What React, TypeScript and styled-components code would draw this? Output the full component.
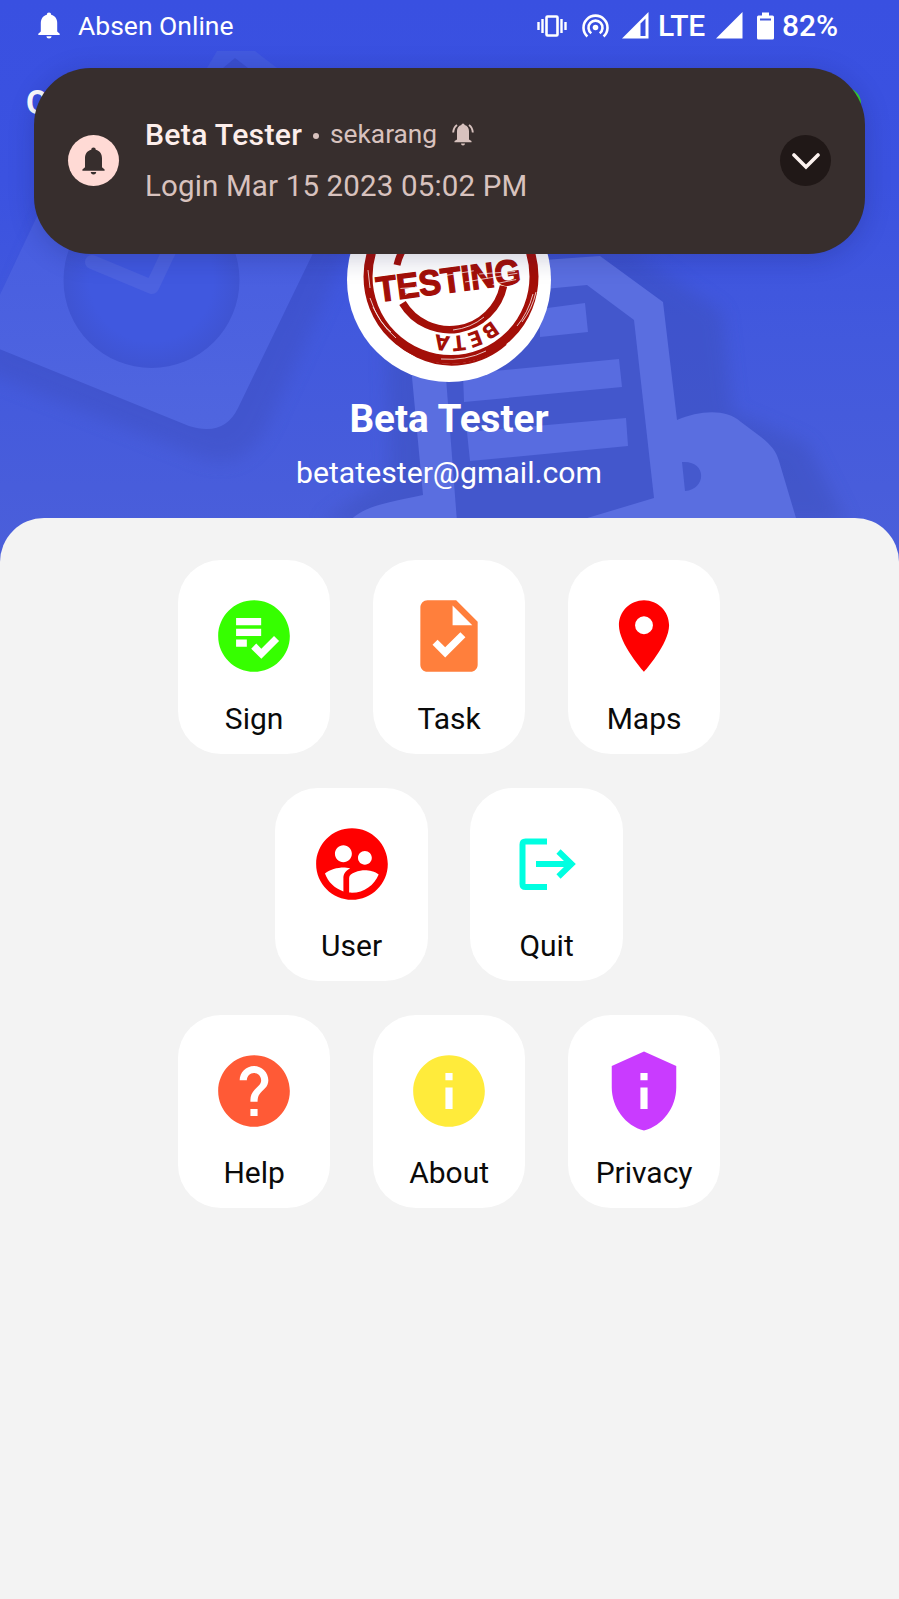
import React from 'react';
import styled, { createGlobalStyle } from 'styled-components';
import type { IconType } from 'react-icons';
import {
  MdPlaylistAddCheckCircle,
  MdTask,
  MdLocationOn,
  MdSupervisedUserCircle,
  MdHelp,
  MdInfo,
  MdPrivacyTip,
} from 'react-icons/md';

const GlobalStyle = createGlobalStyle`
  * { box-sizing: border-box; }
  body { margin: 0; background: #f3f3f3; font-family: Roboto, sans-serif; }
`;

const Screen = styled.div`
  position: relative;
  display: flex;
  flex-direction: column;
  width: 899px;
  height: 1599px;
  overflow: hidden;
  background: linear-gradient(180deg, #3950e1 0, #3b52e0 180px, #4259dd 340px, #4b5fda 560px);
`;

const Header = styled.header`
  position: relative;
  height: 518px;
  display: flex;
  flex-direction: column;
`;

const Artwork = styled.svg`
  position: absolute;
  inset: 0;
`;

const StatusBar = styled.div`
  position: relative;
  display: flex;
  align-items: center;
  height: 51px;
  padding: 0 59px 0 38px;
  color: #fff;
`;

const StatusText = styled.span<{ $size: number; $width: number; $gap: number; $weight?: number; $spacing?: number }>`
  width: ${p => p.$width}px;
  margin-left: ${p => p.$gap}px;
  font: ${p => p.$weight ?? 400} ${p => p.$size}px/50px Roboto, sans-serif;
  letter-spacing: ${p => p.$spacing ?? 0}px;
  white-space: nowrap;
`;

const StatusIcon = styled.svg<{ $gap?: number }>`
  flex: none;
  margin-left: ${p => p.$gap ?? 0}px;
`;

const Spacer = styled.div`
  flex: 1;
`;

const AppBar = styled.div`
  position: relative;
  display: flex;
  align-items: center;
  justify-content: space-between;
  height: 103px;
  padding: 0 38px 0 26px;
`;

const AppTitle = styled.span`
  color: #fff;
  font: 700 33px/40px Roboto, sans-serif;
`;

const OnlineDot = styled.span`
  width: 30px;
  height: 30px;
  border-radius: 50%;
  background: #36d22f;
`;

const Profile = styled.div`
  position: relative;
  display: flex;
  flex-direction: column;
  align-items: center;
  margin-top: 24px;
  padding-right: 1px;
  color: #fff;
`;

const Avatar = styled.div`
  width: 204px;
  height: 204px;
  border-radius: 50%;
  overflow: hidden;
  background: #fff;
`;

const Name = styled.div`
  margin-top: 15px;
  font: 700 38.7px/44px Roboto, sans-serif;
`;

const Email = styled.div`
  margin-top: 14px;
  font: 400 30.2px/36px Roboto, sans-serif;
`;

const Notice = styled.section`
  position: absolute;
  left: 34px;
  top: 67.5px;
  width: 831px;
  height: 186px;
  padding: 0 34px;
  display: flex;
  align-items: center;
  border-radius: 57px;
  background: #372e2d;
  box-shadow: 0 4px 26px rgba(20, 25, 80, 0.22);
`;

const NoticeBadge = styled.div`
  display: grid;
  place-items: center;
  width: 51px;
  height: 51px;
  border-radius: 50%;
  background: #ffdad5;
`;

const NoticeBody = styled.div`
  flex: 1;
  margin-left: 26px;
  color: #d8c2be;
`;

const NoticeHead = styled.div`
  display: flex;
  align-items: center;
  height: 51px;
`;

const NoticeTitle = styled.span`
  width: 157px;
  color: #fdeeeb;
  font: 500 30.2px/51px Roboto, sans-serif;
  letter-spacing: 0.3px;
  white-space: nowrap;
`;

const Bullet = styled.span`
  width: 6px;
  height: 6px;
  margin: 2px 11px 0 11px;
  border-radius: 50%;
  background: #d8c2be;
`;

const NoticeTime = styled.span`
  width: 106px;
  margin-right: 16px;
  font: 400 26.3px/51px Roboto, sans-serif;
  white-space: nowrap;
`;

const NoticeText = styled.div`
  padding-top: 1px;
  font: 400 29.5px/51px Roboto, sans-serif;
  letter-spacing: 0.15px;
  white-space: nowrap;
`;

const Expand = styled.button`
  display: grid;
  place-items: center;
  width: 51px;
  height: 51px;
  padding: 2px 0 0;
  border: 0;
  border-radius: 50%;
  background: #201817;
`;

const Panel = styled.main`
  position: relative;
  flex: 1;
  display: flex;
  flex-direction: column;
  gap: 33.7px;
  padding-top: 42.3px;
  border-radius: 44px 44px 0 0;
  background: #f3f3f3;
`;

const Row = styled.div`
  display: flex;
  justify-content: center;
  gap: 42.7px;
  padding-right: 0.8px;
`;

const Tile = styled.button`
  display: flex;
  flex-direction: column;
  align-items: center;
  width: 152.3px;
  height: 193.6px;
  padding: 33px 0 0;
  border: 0;
  border-radius: 43px;
  background: #fff;
`;

const TileLabel = styled.span`
  margin-top: 21.300px;
  color: #0a0a0a;
  font: 400 30px/36px Roboto, sans-serif;
`;

const Bell = () => (
  <>
    <path d="M11 0.5a2.2 2.2 0 0 1 2.2 2.2c4 1 6 4.200 6 8.300v8.500l2.500 2.300v1.200H.300v-1.200l2.500-2.300V11c0-4.100 2-7.300 6-8.300A2.200 2.200 0 0 1 11 .5z" />
    <path d="M8.400 24.200h5.200a2.600 2.200 0 0 1-5.200 0z" />
  </>
);

const Quit = () => (
  <svg width="86" height="86" viewBox="0 0 86 86" fill="none" stroke="#00ffe1" strokeWidth="6">
    <path d="M43 20.500H21.500q-3 0-3 3v39.500q0 3 3 3h21.500" />
    <path d="M32 43h37M54.500 30.500L67.500 43l-13 12.500" />
  </svg>
);

const Stamp = () => (
  <svg width="204" height="204" viewBox="346 178 204 204">
    <g fill="none" stroke="#a30f08">
      <circle cx="450" cy="276.500" r="83" strokeWidth="9" />
      <path d="M367 278a84 88 0 0 0 138 66" strokeWidth="2" />
      <path d="M402 305a55 55 0 0 0 101-17" strokeWidth="7.500" transform="translate(-.5 -2)" />
      <path d="M396 265a56 56 0 0 1 12-24" strokeWidth="7" />
    </g>
    <g fill="none" stroke="#fff" strokeWidth="1" opacity=".75">
      <path d="M369 298q8 25 26 40M372 307q8 17 18 25M367 270l2 18M532 294q-5 19-16 32M535 292q-4 17-14 30M440 359q25 2 45-8M452 330q18-2 31-13" />
    </g>
    <g transform="rotate(-7.400 449 290)">
      <text
        x="448.500"
        y="292.500"
        textAnchor="middle"
        textLength="145"
        lengthAdjust="spacingAndGlyphs"
        fill="#a30f08"
        stroke="#a30f08"
        strokeWidth="1.300"
        fontFamily="Liberation Sans, sans-serif"
        fontWeight="700"
        fontSize="35.500"
      >
        TESTING
      </text>
      <path d="M400 282l18 1M445 275l30-1M465 284l53-2M480 278l36 2M404 289l12-7M492 290l24-2" stroke="#fff" strokeWidth="1" opacity=".7" />
    </g>
    <path id="beta-arc" d="M494 316.400A59.500 59.500 0 0 1 395 299" fill="none" />
    <text fill="#a30f08" fontFamily="Roboto, sans-serif" fontWeight="900" fontSize="21.500" letterSpacing="2.200">
      <textPath href="#beta-arc" startOffset="5">BETA</textPath>
    </text>
  </svg>
);

const HeaderArt = () => (
  <Artwork width="899" height="560" viewBox="0 0 899 560">
    <defs>
      <filter id="soft" x="-20%" y="-20%" width="140%" height="140%">
        <feGaussianBlur stdDeviation="9" />
      </filter>
      <radialGradient id="dial">
        <stop offset="0.700" stopColor="#4058df" />
        <stop offset="1" stopColor="#3f54d2" />
      </radialGradient>
      <linearGradient id="sheet" gradientUnits="userSpaceOnUse" x1="0" y1="240" x2="0" y2="440">
        <stop offset="0" stopColor="#485ee0" />
        <stop offset="1" stopColor="#5066df" />
      </linearGradient>
    </defs>
    <path d="M-20 370L195 455Q240 475 265 430L350 244V90H100z" fill="#3c4ebb" opacity=".4" filter="url(#soft)" />
    <path d="M207 68l10-17h38l22 17v30h-70z" fill="#425adf" />
    <path d="M223 68l12-10 13 10z" fill="#3a4fcf" />
    <path d="M-3 301L97 90h295L238 408Q224 437 189 426L-3 348z" fill="url(#sheet)" />
    <circle cx="151.500" cy="280" r="88" fill="url(#dial)" />
    <path d="M92 262l60 25 20-42" fill="none" stroke="#4c62e0" strokeWidth="14" strokeLinejoin="round" strokeLinecap="round" />

    <path d="M385 300l40-50h205l92 62 10 100 75 32 40 80H320l70-50z" fill="#3b4db5" opacity=".42" filter="url(#soft)" />
    <path
      d="M402 270L600 256l63 46 14 118c22-9 48-12 64 2l20 15c10 8 15 14 18 24l17 57v10H345c10-19 33-24 78-33z"
      fill="#5a6ee0"
    />
    <path d="M440 299l147-14 47 35 20 178-80 24H457z" fill="#4357cc" />
    <path d="M540 309l45-6 3 29-48 5zM463 374l156-15 3 28-158 15zM467 432l159-14 2 28-158 15z" fill="#586ce0" />
    <path d="M682 462c25-2 25 27 3 29z" fill="#4559cd" />
  </Artwork>
);

const tileRows: { label: string; icon: IconType | null; color: string }[][] = [
  [
    { label: 'Sign', icon: MdPlaylistAddCheckCircle, color: '#36ff00' },
    { label: 'Task', icon: MdTask, color: '#ff7f3c' },
    { label: 'Maps', icon: MdLocationOn, color: '#ff0000' },
  ],
  [
    { label: 'User', icon: MdSupervisedUserCircle, color: '#ff0000' },
    { label: 'Quit', icon: null, color: '#00ffe1' },
  ],
  [
    { label: 'Help', icon: MdHelp, color: '#ff5a36' },
    { label: 'About', icon: MdInfo, color: '#ffeb3b' },
    { label: 'Privacy', icon: MdPrivacyTip, color: '#c93bff' },
  ],
];

export default function App() {
  return (
    <Screen>
      <GlobalStyle />
      <Header>
        <HeaderArt />
        <StatusBar>
          <StatusIcon width="22" height="27" viewBox="0 0 22 27" fill="#fff">
            <Bell />
          </StatusIcon>
          <StatusText $size={26.5} $width={158} $gap={18}>Absen Online</StatusText>
          <Spacer />
          <StatusIcon width="30" height="22" viewBox="0 0 30 22" fill="none" stroke="#fff" strokeWidth="2.600">
            <rect x="9.500" y="1.500" width="11" height="19" rx="1" />
            <path d="M1.500 7v8M5.500 4v14M24.500 4v14M28.500 7v8" strokeWidth="2.400" />
          </StatusIcon>
          <StatusIcon $gap={15} width="27" height="24" viewBox="0 0 27 24" fill="none" stroke="#fff" strokeWidth="2.600">
            <circle cx="13.500" cy="13.500" r="2.800" fill="#fff" stroke="none" />
            <path d="M9.300 19.200a7 7 0 1 1 8.400 0M5.400 22.500a12 12 0 1 1 16.200 0" />
          </StatusIcon>
          <StatusIcon $gap={13} width="27" height="27" viewBox="0 0 27 27" fill="#fff">
            <path fillRule="evenodd" d="M0 26.500L26.500 0v26.500zM18.500 11.500v12.500h5V6.500z" />
          </StatusIcon>
          <StatusText $size={30} $width={49} $gap={9} $weight={500} $spacing={-0.3}>LTE</StatusText>
          <StatusIcon $gap={9} width="27" height="27" viewBox="0 0 27 27" fill="#fff">
            <path d="M0 26.500L26.500 0v26.500z" />
          </StatusIcon>
          <StatusIcon $gap={14} width="17" height="28" viewBox="0 0 17 28">
            <path d="M5 .5h7v3h3.500q1.500 0 1.500 1.500v21q0 1.500-1.500 1.500h-14Q0 27.500 0 26V5q0-1.500 1.500-1.500H5z" fill="#fff" />
            <path d="M3 6.500h11v2H3z" fill="#4257dc" />
          </StatusIcon>
          <StatusText $size={30} $width={58} $gap={8} $weight={500}>82%</StatusText>
        </StatusBar>
        <AppBar>
          <AppTitle>O</AppTitle>
          <OnlineDot />
        </AppBar>
        <Profile>
          <Avatar>
            <Stamp />
          </Avatar>
          <Name>Beta Tester</Name>
          <Email>betatester@gmail.com</Email>
        </Profile>
      </Header>
      <Panel>
        {tileRows.map((row, i) => (
          <Row key={i}>
            {row.map(({ label, icon: Icon, color }) => (
              <Tile key={label}>
                {Icon ? <Icon size={86} color={color} /> : <Quit />}
                <TileLabel>{label}</TileLabel>
              </Tile>
            ))}
          </Row>
        ))}
      </Panel>
      <Notice>
        <NoticeBadge>
          <svg width="23" height="28" viewBox="0 0 22 27" fill="#372e2d">
            <Bell />
          </svg>
        </NoticeBadge>
        <NoticeBody>
          <NoticeHead>
            <NoticeTitle>Beta Tester</NoticeTitle>
            <Bullet />
            <NoticeTime>sekarang</NoticeTime>
            <svg width="22" height="23" viewBox="0 0 22 23" fill="#d8c2be">
              <path d="M11 .5a1.600 1.600 0 0 1 1.600 1.600c2.800.7 4.400 3 4.400 6v8.400l2.500 1.500v1.200h-17V18L5 16.500V8.100c0-3 1.600-5.300 4.400-6A1.600 1.600 0 0 1 11 .5z" />
              <path d="M9 20.500h4a2 2 0 0 1-4 0z" />
              <path d="M1.200 9.500Q1.500 4.500 5 2M20.800 9.500Q20.500 4.500 17 2" fill="none" stroke="#d8c2be" strokeWidth="1.900" />
            </svg>
          </NoticeHead>
          <NoticeText>Login Mar 15 2023 05:02 PM</NoticeText>
        </NoticeBody>
        <Expand aria-label="Expand">
          <svg width="28" height="17" viewBox="0 0 28 17" fill="none" stroke="#fdf3f0" strokeWidth="3.600" strokeLinecap="round">
            <path d="M2 2L14 14 26 2" />
          </svg>
        </Expand>
      </Notice>
    </Screen>
  );
}
